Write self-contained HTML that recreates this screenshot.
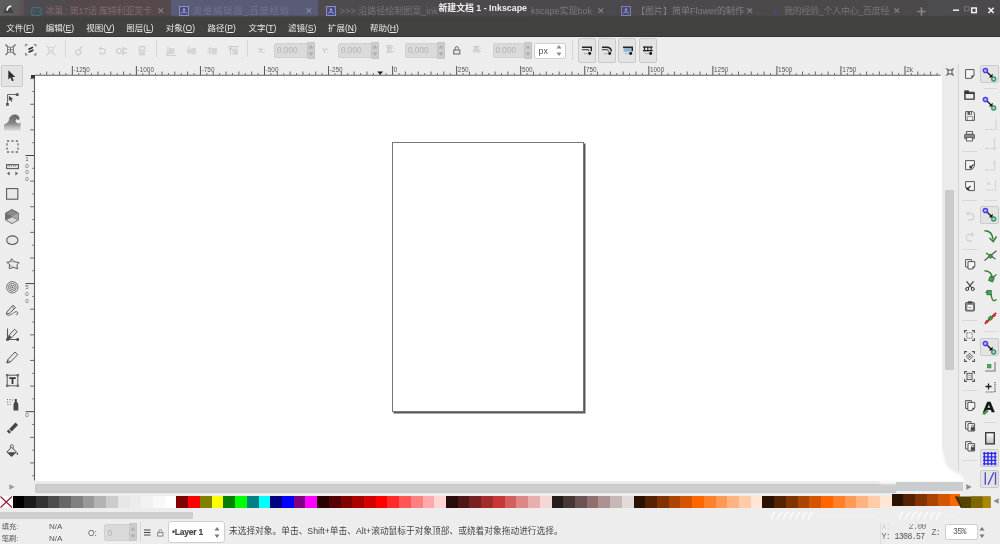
<!DOCTYPE html><html lang="zh"><head><meta charset="utf-8"><title>新建文档 1 - Inkscape</title><style>
*{box-sizing:border-box;margin:0;padding:0}
html,body{width:1000px;height:544px;overflow:hidden;background:#ededed}
body{position:relative;font-family:"Liberation Sans","Noto Sans CJK SC",sans-serif;font-size:8.5px;color:#3c3c3c}
.abs{position:absolute}
.t{position:absolute;white-space:nowrap;line-height:1}
#title{position:absolute;left:0;top:0;width:1000px;height:17.500px;background:#4b4849;overflow:hidden}
#title .tab{color:#8d8a8c;font-size:9px;top:7.300px}
#menu{position:absolute;left:0;top:16.500px;width:1000px;height:20px;background:#414140;border-bottom:1.500px solid #333}
#menu .t{color:#eceae6;font-size:8.500px;top:7.300px}
#menu u{text-decoration:underline;text-underline-offset:1px}
.sep{position:absolute;width:1px;background:#d6d6d6}
.hsep{position:absolute;height:1px;background:#d9d9d9}
.fld{position:absolute;background:#dadada;border:1px solid #d0d0d0;border-radius:2px}
.fld .t{color:#b4b4b4;font-size:8.5px}
.lbl{color:#b9b9b9;font-size:7.5px}
.wfld{position:absolute;background:#fff;border:1px solid #cfcfcf;border-radius:2px}
.tb{position:absolute;background:#e3e3e3;border:1px solid #cacaca;border-radius:2px}
svg{position:absolute;overflow:visible}
#hruler,#vruler,#menu,#title,#status,#toolbar,#snapbar{will-change:transform}
.sw{position:absolute;top:495.800px;height:12.300px}
</style></head><body>
<div id="title">
<div class="abs" style="left:0;top:0;width:1000px;height:19px;background:linear-gradient(90deg,#4e4c51 0,#4e4b50 40px,#54494c 90px,#56494c 165px,#4e4a4e 330px,#4b494c 600px,#4d494b 800px,#4b494b 1000px)"></div>
<div class="abs" style="left:0;top:0;width:23.500px;height:16px;background:linear-gradient(90deg,#5e5e5e,#5c5a5b 70%,#5a5053)"></div>
<div class="abs" style="left:171px;top:0;width:146.5px;height:17px;background:#5a5c77"></div>
<div class="abs" style="left:0;top:14.500px;width:1000px;height:2.500px;background:linear-gradient(180deg,rgba(65,65,64,0),#414140)"></div>
<svg style="left:2.500px;top:3px" width="12" height="11" viewBox="0 0 12 11"><path d="M.5 9.500L3 4L5.500 2.500L8.500 6L11 10H1Z" fill="#3b3b3b" opacity=".8"/><path d="M3.200 7.500C3.200 4.800 4.800 2.800 7.600 2.200L8.600 3.800C6.600 4.200 5.200 5.400 4.800 7.800Z" fill="#f2f2f2"/></svg>
<svg style="left:31px;top:6px" width="11" height="10" viewBox="0 0 11 10"><rect x=".7" y="1.7" width="9.6" height="7.6" rx="1.5" fill="none" stroke="#3c747d" stroke-width="1.2"/><path d="M3.4 4.6v1.6M7.6 4.6v1.6" stroke="#3c747d" stroke-width="1"/></svg>
<span class="t tab" style="left:45.5px;color:#82696c;letter-spacing:-.25px">冰菓 : 第17话 库特利亚芙卡</span>
<span class="t tab" style="left:157px;color:#8f8a8c;font-size:9px">✕</span>
<svg style="left:179px;top:6px" width="10" height="10" viewBox="0 0 10 10"><rect x=".5" y=".5" width="9" height="9" fill="#4b4f86" stroke="#8b8fbe" stroke-width="1"/><path d="M2.6 7.4 C2.6 5.4 7.4 5.4 7.4 7.4" fill="none" stroke="#b5b8dd" stroke-width="1"/><circle cx="5" cy="3.6" r="1.1" fill="#b5b8dd"/></svg>
<span class="t tab" style="left:193px;color:#70718a;letter-spacing:1.100px">奥维编辑器_百度经验</span>
<span class="t tab" style="left:305px;color:#8d8ea3">✕</span>
<svg style="left:326px;top:6px" width="10" height="10" viewBox="0 0 10 10"><rect x=".5" y=".5" width="9" height="9" fill="#474c8a" stroke="#8b8fbe" stroke-width="1"/><path d="M2.6 7.4 C2.6 5.4 7.4 5.4 7.4 7.4" fill="none" stroke="#b5b8dd" stroke-width="1"/><circle cx="5" cy="3.6" r="1.1" fill="#b5b8dd"/></svg>
<span class="t tab" style="left:340px;color:#767377">&gt;&gt;&gt; 沿路径绘制图案_ink</span>
<span class="t tab" style="left:531px;color:#7b787c">kscape实现bok</span>
<span class="t tab" style="left:597px;color:#8f8c90">✕</span>
<svg style="left:621px;top:6px" width="10" height="10" viewBox="0 0 10 10"><rect x=".5" y=".5" width="9" height="9" fill="#4a4a78" stroke="#7f7fa8" stroke-width="1"/><path d="M2.6 7.4 C2.6 5.4 7.4 5.4 7.4 7.4" fill="none" stroke="#a5a8cd" stroke-width="1"/><circle cx="5" cy="3.6" r="1.1" fill="#a5a8cd"/></svg>
<span class="t tab" style="left:636px;color:#807c80">【图片】简单Flower的制作</span>
<span class="t tab" style="left:746px;color:#8f8c90">✕</span>
<svg style="left:771px;top:6.500px" width="9" height="9" viewBox="0 0 9 9"><path d="M1 8 L4.5 .8 L8 8 Z" fill="#4c4670"/></svg>
<span class="t tab" style="left:784px;color:#767377;letter-spacing:-.3px">我的经验_个人中心_百度经</span>
<span class="t tab" style="left:893px;color:#8f8c90">✕</span>
<svg style="left:916.500px;top:7px" width="9" height="9" viewBox="0 0 9 9"><path d="M4.500 .3v8.400M.3 4.500h8.400" stroke="#858385" stroke-width="1.700"/></svg>
<span class="t" style="left:438.5px;top:4px;font-size:8.85px;font-weight:bold;color:#f2f1ef">新建文档 1 - Inkscape</span>
<div class="abs" style="left:928px;top:0;width:32px;height:16px;background:#4f4e55;opacity:.6"></div><svg style="left:951px;top:3.500px" width="48" height="12" viewBox="0 0 48 12"><path d="M2 6.200h6" stroke="#f0f0f0" stroke-width="1.500"/><rect x="13.500" y="2.800" width="4.500" height="4" fill="none" stroke="#77757a" stroke-width="1"/><rect x="20.700" y="4" width="4.600" height="4.600" fill="none" stroke="#f0f0f0" stroke-width="1.500"/><path d="M37.500 3.800l5.200 5.200M42.700 3.800l-5.200 5.200" stroke="#f0f0f0" stroke-width="1.600"/></svg>

</div>
<div id="menu">
<span class="t" style="left:6.2px">文件(<u>F</u>)</span>
<span class="t" style="left:45.7px">编辑(<u>E</u>)</span>
<span class="t" style="left:86.2px">视图(<u>V</u>)</span>
<span class="t" style="left:126.2px">图层(<u>L</u>)</span>
<span class="t" style="left:165.7px">对象(<u>O</u>)</span>
<span class="t" style="left:207.5px">路径(<u>P</u>)</span>
<span class="t" style="left:248.4px">文字(<u>T</u>)</span>
<span class="t" style="left:288px">滤镜(<u>S</u>)</span>
<span class="t" style="left:328px">扩展(<u>N</u>)</span>
<span class="t" style="left:370px">帮助(<u>H</u>)</span>
</div>
<div id="toolbar" class="abs" style="left:0;top:36px;width:1000px;height:28px">
<svg style="left:4.800px;top:8.400px" width="11" height="11.400" viewBox="0 0 11 11.400"><path d="M.5 .5l2.500 2.500M10.500 .5l-2.500 2.500M.5 10.900l2.500 -2.500M10.500 10.900l-2.500 -2.500" stroke="#6e6e6e" stroke-width="1.400"/><path d="M2.500 3.200h6v5h-6zM5.500 3.200v5M2.500 5.700h6" fill="none" stroke="#7a7a7a" stroke-width="1"/></svg>
<svg style="left:25px;top:8.400px" width="11.400" height="11.400" viewBox="0 0 11.400 11.400"><path d="M.6 2.600V.6H2.600M8.800 .6H10.800V2.600M.6 8.800V10.800H2.600M8.800 10.800H10.800V8.800" fill="none" stroke="#8a8a8a" stroke-width="1.300"/><path d="M3.400 5.400L8 3.200M3.600 8.200L8.400 6" fill="none" stroke="#333" stroke-width="1.700"/></svg>
<svg style="left:46.300px;top:9px" width="10" height="11" viewBox="0 0 10 11"><path d="M.5 .5l2 2M9.500 .5l-2 2M.5 10.500l2 -2M9.500 10.500l-2 -2" stroke="#d4d4d4" stroke-width="1.200"/><rect x="2.500" y="2.500" width="5" height="2.500" fill="none" stroke="#d6d6d6"/><rect x="2.500" y="6.500" width="5" height="2" fill="none" stroke="#d6d6d6"/></svg>
<div class="sep" style="left:65px;top:4px;height:17px"></div>
<svg style="left:75px;top:10px" width="8" height="10" viewBox="0 0 8 10"><circle cx="3.200" cy="6.300" r="2.500" fill="none" stroke="#cfcfcf" stroke-width="1.200"/><path d="M4.500 3.500l2.500 -3" stroke="#cfcfcf" stroke-width="1.200"/></svg>
<svg style="left:98px;top:10px" width="8" height="10" viewBox="0 0 8 10"><path d="M1 2.500h3.500a2.800 2.800 0 1 1 -2.800 3.500" fill="none" stroke="#cfcfcf" stroke-width="1.200"/><path d="M3 .3L.5 2.500L3 4.700Z" fill="#cfcfcf"/></svg>
<svg style="left:115.500px;top:10px" width="12" height="10" viewBox="0 0 12 10"><circle cx="3" cy="5" r="2.500" fill="none" stroke="#cdcdcd" stroke-width="1.200"/><path d="M7 1v8M7 3h4M7 7h4" stroke="#cdcdcd" stroke-width="1.400"/></svg>
<svg style="left:138px;top:10px" width="8" height="10" viewBox="0 0 8 10"><rect x="1.200" y=".6" width="5.600" height="3.400" rx="1" fill="none" stroke="#cdcdcd" stroke-width="1.200"/><path d="M.3 5.200h7.400" stroke="#cdcdcd" stroke-width="1"/><rect x="1" y="6.400" width="6" height="3" fill="#d2d2d2"/></svg>
<div class="sep" style="left:156px;top:4px;height:17px"></div>
<svg style="left:166px;top:10px" width="10" height="10" viewBox="0 0 10 10"><rect x="3" y="2" width="5.500" height="6" fill="#d6d6d6"/><path d="M2 0v8M0 6l2 2.300l2 -2.300M0 9.500h10" fill="none" stroke="#cfcfcf" stroke-width="1.100"/></svg>
<svg style="left:185.500px;top:10px" width="11" height="10" viewBox="0 0 11 10"><rect x="5" y="2" width="5" height="6.500" fill="#d6d6d6"/><path d="M3 0v7M1 5l2 2.300l2 -2.300M0 4h6" fill="none" stroke="#cfcfcf" stroke-width="1.100"/></svg>
<svg style="left:207px;top:10px" width="11" height="10" viewBox="0 0 11 10"><rect x="5" y="2" width="5" height="6.500" fill="#d6d6d6"/><path d="M3 9V2M1 4l2 -2.300l2 2.300M0 6h6" fill="none" stroke="#cfcfcf" stroke-width="1.100"/></svg>
<svg style="left:228px;top:10px" width="11" height="10" viewBox="0 0 11 10"><rect x="4.500" y="2.500" width="5.500" height="6.500" fill="#d6d6d6"/><path d="M2.500 9.500V2M.5 4l2 -2.300l2 2.300M0 .6h11" fill="none" stroke="#cfcfcf" stroke-width="1.100"/></svg>
<div class="sep" style="left:247px;top:4px;height:17px"></div>
<span class="t lbl" style="left:258px;top:10.5px">X:</span>
<div class="fld" style="left:274px;top:6.500px;width:40.500px;height:15.800px"><span class="t" style="left:2px;top:3.400px;font-size:8.200px">0.000</span></div>
<span class="t lbl" style="left:322px;top:10.5px">Y:</span>
<div class="fld" style="left:338px;top:6.500px;width:40.500px;height:15.800px"><span class="t" style="left:2px;top:3.400px;font-size:8.200px">0.000</span></div>
<span class="t lbl" style="left:385.500px;top:10.300px">宽:</span>
<div class="fld" style="left:405px;top:6.500px;width:40px;height:15.800px"><span class="t" style="left:2px;top:3.400px;font-size:8.200px">0.000</span></div>
<svg style="left:452.500px;top:10px" width="8" height="9" viewBox="0 0 8 9"><rect x=".8" y="4" width="6" height="4" fill="none" stroke="#6a6a6a" stroke-width="1.100"/><path d="M2.200 4V2.200a1.600 1.600 0 0 1 3.200 0V3" fill="none" stroke="#6a6a6a" stroke-width="1"/></svg>
<span class="t lbl" style="left:472.500px;top:10.300px">高:</span>
<div class="fld" style="left:492.500px;top:6.500px;width:39px;height:15.800px"><span class="t" style="left:2px;top:3.400px;font-size:8.200px">0.000</span></div>
<div class="wfld" style="left:534px;top:6.500px;width:32px;height:16.500px"><span class="t" style="left:3.500px;top:3px;color:#555;font-size:8.800px">px</span></div>
<div class="sep" style="left:572px;top:4px;height:20px"></div>
<div class="tb" style="left:577.500px;top:2px;width:18.300px;height:25px"></div>
<div class="tb" style="left:597.500px;top:2px;width:18.300px;height:25px"></div>
<div class="tb" style="left:618px;top:2px;width:18.300px;height:25px"></div>
<div class="tb" style="left:638.500px;top:2px;width:18.300px;height:25px"></div>
<div class="abs" style="left:306.5px;top:6px;width:8px;height:17px;background:#cdcdcd;border:1px solid #c4c4c4;border-radius:1px"></div>
<svg style="left:307.5px;top:8.2px" width="6" height="13" viewBox="0 0 6 13"><path d="M.5 4.500L3 1L5.500 4.500Z M.5 8.500L3 12L5.500 8.500Z" fill="#aeaeae"/></svg>
<div class="abs" style="left:370.5px;top:6px;width:8px;height:17px;background:#cdcdcd;border:1px solid #c4c4c4;border-radius:1px"></div>
<svg style="left:371.5px;top:8.2px" width="6" height="13" viewBox="0 0 6 13"><path d="M.5 4.500L3 1L5.500 4.500Z M.5 8.500L3 12L5.500 8.500Z" fill="#aeaeae"/></svg>
<div class="abs" style="left:437px;top:6px;width:8px;height:17px;background:#cdcdcd;border:1px solid #c4c4c4;border-radius:1px"></div>
<svg style="left:438px;top:8.2px" width="6" height="13" viewBox="0 0 6 13"><path d="M.5 4.500L3 1L5.500 4.500Z M.5 8.500L3 12L5.500 8.500Z" fill="#aeaeae"/></svg>
<div class="abs" style="left:523.5px;top:6px;width:8px;height:17px;background:#cdcdcd;border:1px solid #c4c4c4;border-radius:1px"></div>
<svg style="left:524.5px;top:8.2px" width="6" height="13" viewBox="0 0 6 13"><path d="M.5 4.500L3 1L5.500 4.500Z M.5 8.500L3 12L5.500 8.500Z" fill="#aeaeae"/></svg>
<svg style="left:556px;top:8.2px" width="6" height="13" viewBox="0 0 6 13"><path d="M.5 4.500L3 1L5.500 4.500Z M.5 8.500L3 12L5.500 8.500Z" fill="#8a8a8a"/></svg>
<svg style="left:581.7px;top:9.600px" width="10" height="9" viewBox="0 0 10 9"><path d="M0 1.200H9.300V5.200" stroke="#222" stroke-width="1.400" fill="none"/><path d="M0 3.700H6.600V5.200" stroke="#333" stroke-width="1" fill="none"/><circle cx="7.700" cy="7.500" r="1.450" fill="#111"/><path d="M2.200 7.600h3.600" stroke="#777" stroke-width=".8" stroke-dasharray=".9 .6"/></svg>
<svg style="left:602.2px;top:9.600px" width="10" height="9" viewBox="0 0 10 9"><path d="M0 1.200H4.500C7.500 1.200 9.300 3 9.300 5.600" stroke="#222" stroke-width="1.400" fill="none"/><path d="M0 3.700H4C6 3.700 6.800 4.500 6.800 5.600" stroke="#333" stroke-width="1" fill="none"/><circle cx="7.700" cy="7.500" r="1.450" fill="#111"/><path d="M2.200 7.600h3.600" stroke="#777" stroke-width=".8" stroke-dasharray=".9 .6"/></svg>
<svg style="left:622.6px;top:9.600px" width="10" height="9" viewBox="0 0 10 9"><rect x=".5" y="1.800" width="8.300" height="4" fill="#8fb4dc"/><path d="M0 1.200H9.300V5.200" stroke="#222" stroke-width="1.400" fill="none"/><circle cx="7.700" cy="7.500" r="1.450" fill="#111"/><path d="M2.200 7.600h3.600" stroke="#777" stroke-width=".8" stroke-dasharray=".9 .6"/></svg>
<svg style="left:643px;top:9.600px" width="10" height="9" viewBox="0 0 10 9"><path d="M0 1.200H9.600M0 4.600H9.600" stroke="#222" stroke-width="1.300" fill="none"/><path d="M1.500 .6V5.200M4.800 .6V5.200M8.100 .6V5.200" stroke="#222" stroke-width="1.100"/><circle cx="7.700" cy="7.500" r="1.450" fill="#111"/><path d="M2.200 7.600h3.600" stroke="#777" stroke-width=".8" stroke-dasharray=".9 .6"/></svg>

</div>
<div class="abs" id="canvas" style="left:35px;top:76px;width:907px;height:405px;background:#fff"></div>
<div class="abs" id="page" style="left:392px;top:142px;width:191.700px;height:270px;border:1px solid #777;background:#fff;box-shadow:1.500px 1.500px 0 0 #585858"></div>
<svg style="left:0px;top:0px" width="1000" height="80" viewBox="0 0 1000 80" id="hruler" font-family="Liberation Sans, sans-serif"><line x1="35" y1="75.200" x2="940.500" y2="75.200" stroke="#626262" stroke-width="1.100"/><line x1="40.33" y1="73" x2="40.33" y2="75" stroke="#777" stroke-width="1"/><line x1="46.73" y1="71.5" x2="46.73" y2="75" stroke="#6a6a6a" stroke-width="1"/><line x1="53.14" y1="73" x2="53.14" y2="75" stroke="#777" stroke-width="1"/><line x1="59.54" y1="71.5" x2="59.54" y2="75" stroke="#6a6a6a" stroke-width="1"/><line x1="65.95" y1="73" x2="65.95" y2="75" stroke="#777" stroke-width="1"/><line x1="72.35" y1="66" x2="72.35" y2="75" stroke="#555" stroke-width="1"/><text x="73.55" y="71.500" font-size="6.400" fill="#555">-1250</text><line x1="78.76" y1="73" x2="78.76" y2="75" stroke="#777" stroke-width="1"/><line x1="85.16" y1="71.5" x2="85.16" y2="75" stroke="#6a6a6a" stroke-width="1"/><line x1="91.57" y1="73" x2="91.57" y2="75" stroke="#777" stroke-width="1"/><line x1="97.97" y1="71.5" x2="97.97" y2="75" stroke="#6a6a6a" stroke-width="1"/><line x1="104.38" y1="73" x2="104.38" y2="75" stroke="#777" stroke-width="1"/><line x1="110.78" y1="71.5" x2="110.78" y2="75" stroke="#6a6a6a" stroke-width="1"/><line x1="117.19" y1="73" x2="117.19" y2="75" stroke="#777" stroke-width="1"/><line x1="123.59" y1="71.5" x2="123.59" y2="75" stroke="#6a6a6a" stroke-width="1"/><line x1="130.00" y1="73" x2="130.00" y2="75" stroke="#777" stroke-width="1"/><line x1="136.40" y1="66" x2="136.40" y2="75" stroke="#555" stroke-width="1"/><text x="137.60" y="71.500" font-size="6.400" fill="#555">-1000</text><line x1="142.81" y1="73" x2="142.81" y2="75" stroke="#777" stroke-width="1"/><line x1="149.21" y1="71.5" x2="149.21" y2="75" stroke="#6a6a6a" stroke-width="1"/><line x1="155.62" y1="73" x2="155.62" y2="75" stroke="#777" stroke-width="1"/><line x1="162.02" y1="71.5" x2="162.02" y2="75" stroke="#6a6a6a" stroke-width="1"/><line x1="168.43" y1="73" x2="168.43" y2="75" stroke="#777" stroke-width="1"/><line x1="174.83" y1="71.5" x2="174.83" y2="75" stroke="#6a6a6a" stroke-width="1"/><line x1="181.24" y1="73" x2="181.24" y2="75" stroke="#777" stroke-width="1"/><line x1="187.64" y1="71.5" x2="187.64" y2="75" stroke="#6a6a6a" stroke-width="1"/><line x1="194.05" y1="73" x2="194.05" y2="75" stroke="#777" stroke-width="1"/><line x1="200.45" y1="66" x2="200.45" y2="75" stroke="#555" stroke-width="1"/><text x="201.65" y="71.500" font-size="6.400" fill="#555">-750</text><line x1="206.86" y1="73" x2="206.86" y2="75" stroke="#777" stroke-width="1"/><line x1="213.26" y1="71.5" x2="213.26" y2="75" stroke="#6a6a6a" stroke-width="1"/><line x1="219.67" y1="73" x2="219.67" y2="75" stroke="#777" stroke-width="1"/><line x1="226.07" y1="71.5" x2="226.07" y2="75" stroke="#6a6a6a" stroke-width="1"/><line x1="232.48" y1="73" x2="232.48" y2="75" stroke="#777" stroke-width="1"/><line x1="238.88" y1="71.5" x2="238.88" y2="75" stroke="#6a6a6a" stroke-width="1"/><line x1="245.29" y1="73" x2="245.29" y2="75" stroke="#777" stroke-width="1"/><line x1="251.69" y1="71.5" x2="251.69" y2="75" stroke="#6a6a6a" stroke-width="1"/><line x1="258.10" y1="73" x2="258.10" y2="75" stroke="#777" stroke-width="1"/><line x1="264.50" y1="66" x2="264.50" y2="75" stroke="#555" stroke-width="1"/><text x="265.70" y="71.500" font-size="6.400" fill="#555">-500</text><line x1="270.91" y1="73" x2="270.91" y2="75" stroke="#777" stroke-width="1"/><line x1="277.31" y1="71.5" x2="277.31" y2="75" stroke="#6a6a6a" stroke-width="1"/><line x1="283.72" y1="73" x2="283.72" y2="75" stroke="#777" stroke-width="1"/><line x1="290.12" y1="71.5" x2="290.12" y2="75" stroke="#6a6a6a" stroke-width="1"/><line x1="296.53" y1="73" x2="296.53" y2="75" stroke="#777" stroke-width="1"/><line x1="302.93" y1="71.5" x2="302.93" y2="75" stroke="#6a6a6a" stroke-width="1"/><line x1="309.34" y1="73" x2="309.34" y2="75" stroke="#777" stroke-width="1"/><line x1="315.74" y1="71.5" x2="315.74" y2="75" stroke="#6a6a6a" stroke-width="1"/><line x1="322.15" y1="73" x2="322.15" y2="75" stroke="#777" stroke-width="1"/><line x1="328.55" y1="66" x2="328.55" y2="75" stroke="#555" stroke-width="1"/><text x="329.75" y="71.500" font-size="6.400" fill="#555">-250</text><line x1="334.96" y1="73" x2="334.96" y2="75" stroke="#777" stroke-width="1"/><line x1="341.36" y1="71.5" x2="341.36" y2="75" stroke="#6a6a6a" stroke-width="1"/><line x1="347.77" y1="73" x2="347.77" y2="75" stroke="#777" stroke-width="1"/><line x1="354.17" y1="71.5" x2="354.17" y2="75" stroke="#6a6a6a" stroke-width="1"/><line x1="360.58" y1="73" x2="360.58" y2="75" stroke="#777" stroke-width="1"/><line x1="366.98" y1="71.5" x2="366.98" y2="75" stroke="#6a6a6a" stroke-width="1"/><line x1="373.39" y1="73" x2="373.39" y2="75" stroke="#777" stroke-width="1"/><line x1="379.79" y1="71.5" x2="379.79" y2="75" stroke="#6a6a6a" stroke-width="1"/><line x1="386.20" y1="73" x2="386.20" y2="75" stroke="#777" stroke-width="1"/><line x1="392.60" y1="66" x2="392.60" y2="75" stroke="#555" stroke-width="1"/><text x="393.80" y="71.500" font-size="6.400" fill="#555">0</text><line x1="399.00" y1="73" x2="399.00" y2="75" stroke="#777" stroke-width="1"/><line x1="405.41" y1="71.5" x2="405.41" y2="75" stroke="#6a6a6a" stroke-width="1"/><line x1="411.81" y1="73" x2="411.81" y2="75" stroke="#777" stroke-width="1"/><line x1="418.22" y1="71.5" x2="418.22" y2="75" stroke="#6a6a6a" stroke-width="1"/><line x1="424.62" y1="73" x2="424.62" y2="75" stroke="#777" stroke-width="1"/><line x1="431.03" y1="71.5" x2="431.03" y2="75" stroke="#6a6a6a" stroke-width="1"/><line x1="437.44" y1="73" x2="437.44" y2="75" stroke="#777" stroke-width="1"/><line x1="443.84" y1="71.5" x2="443.84" y2="75" stroke="#6a6a6a" stroke-width="1"/><line x1="450.25" y1="73" x2="450.25" y2="75" stroke="#777" stroke-width="1"/><line x1="456.65" y1="66" x2="456.65" y2="75" stroke="#555" stroke-width="1"/><text x="457.85" y="71.500" font-size="6.400" fill="#555">250</text><line x1="463.06" y1="73" x2="463.06" y2="75" stroke="#777" stroke-width="1"/><line x1="469.46" y1="71.5" x2="469.46" y2="75" stroke="#6a6a6a" stroke-width="1"/><line x1="475.87" y1="73" x2="475.87" y2="75" stroke="#777" stroke-width="1"/><line x1="482.27" y1="71.5" x2="482.27" y2="75" stroke="#6a6a6a" stroke-width="1"/><line x1="488.68" y1="73" x2="488.68" y2="75" stroke="#777" stroke-width="1"/><line x1="495.08" y1="71.5" x2="495.08" y2="75" stroke="#6a6a6a" stroke-width="1"/><line x1="501.49" y1="73" x2="501.49" y2="75" stroke="#777" stroke-width="1"/><line x1="507.89" y1="71.5" x2="507.89" y2="75" stroke="#6a6a6a" stroke-width="1"/><line x1="514.30" y1="73" x2="514.30" y2="75" stroke="#777" stroke-width="1"/><line x1="520.70" y1="66" x2="520.70" y2="75" stroke="#555" stroke-width="1"/><text x="521.90" y="71.500" font-size="6.400" fill="#555">500</text><line x1="527.11" y1="73" x2="527.11" y2="75" stroke="#777" stroke-width="1"/><line x1="533.51" y1="71.5" x2="533.51" y2="75" stroke="#6a6a6a" stroke-width="1"/><line x1="539.91" y1="73" x2="539.91" y2="75" stroke="#777" stroke-width="1"/><line x1="546.32" y1="71.5" x2="546.32" y2="75" stroke="#6a6a6a" stroke-width="1"/><line x1="552.73" y1="73" x2="552.73" y2="75" stroke="#777" stroke-width="1"/><line x1="559.13" y1="71.5" x2="559.13" y2="75" stroke="#6a6a6a" stroke-width="1"/><line x1="565.53" y1="73" x2="565.53" y2="75" stroke="#777" stroke-width="1"/><line x1="571.94" y1="71.5" x2="571.94" y2="75" stroke="#6a6a6a" stroke-width="1"/><line x1="578.35" y1="73" x2="578.35" y2="75" stroke="#777" stroke-width="1"/><line x1="584.75" y1="66" x2="584.75" y2="75" stroke="#555" stroke-width="1"/><text x="585.95" y="71.500" font-size="6.400" fill="#555">750</text><line x1="591.15" y1="73" x2="591.15" y2="75" stroke="#777" stroke-width="1"/><line x1="597.56" y1="71.5" x2="597.56" y2="75" stroke="#6a6a6a" stroke-width="1"/><line x1="603.97" y1="73" x2="603.97" y2="75" stroke="#777" stroke-width="1"/><line x1="610.37" y1="71.5" x2="610.37" y2="75" stroke="#6a6a6a" stroke-width="1"/><line x1="616.77" y1="73" x2="616.77" y2="75" stroke="#777" stroke-width="1"/><line x1="623.18" y1="71.5" x2="623.18" y2="75" stroke="#6a6a6a" stroke-width="1"/><line x1="629.59" y1="73" x2="629.59" y2="75" stroke="#777" stroke-width="1"/><line x1="635.99" y1="71.5" x2="635.99" y2="75" stroke="#6a6a6a" stroke-width="1"/><line x1="642.39" y1="73" x2="642.39" y2="75" stroke="#777" stroke-width="1"/><line x1="648.80" y1="66" x2="648.80" y2="75" stroke="#555" stroke-width="1"/><text x="650.00" y="71.500" font-size="6.400" fill="#555">1000</text><line x1="655.20" y1="73" x2="655.20" y2="75" stroke="#777" stroke-width="1"/><line x1="661.61" y1="71.5" x2="661.61" y2="75" stroke="#6a6a6a" stroke-width="1"/><line x1="668.01" y1="73" x2="668.01" y2="75" stroke="#777" stroke-width="1"/><line x1="674.42" y1="71.5" x2="674.42" y2="75" stroke="#6a6a6a" stroke-width="1"/><line x1="680.83" y1="73" x2="680.83" y2="75" stroke="#777" stroke-width="1"/><line x1="687.23" y1="71.5" x2="687.23" y2="75" stroke="#6a6a6a" stroke-width="1"/><line x1="693.63" y1="73" x2="693.63" y2="75" stroke="#777" stroke-width="1"/><line x1="700.04" y1="71.5" x2="700.04" y2="75" stroke="#6a6a6a" stroke-width="1"/><line x1="706.44" y1="73" x2="706.44" y2="75" stroke="#777" stroke-width="1"/><line x1="712.85" y1="66" x2="712.85" y2="75" stroke="#555" stroke-width="1"/><text x="714.05" y="71.500" font-size="6.400" fill="#555">1250</text><line x1="719.25" y1="73" x2="719.25" y2="75" stroke="#777" stroke-width="1"/><line x1="725.66" y1="71.5" x2="725.66" y2="75" stroke="#6a6a6a" stroke-width="1"/><line x1="732.07" y1="73" x2="732.07" y2="75" stroke="#777" stroke-width="1"/><line x1="738.47" y1="71.5" x2="738.47" y2="75" stroke="#6a6a6a" stroke-width="1"/><line x1="744.88" y1="73" x2="744.88" y2="75" stroke="#777" stroke-width="1"/><line x1="751.28" y1="71.5" x2="751.28" y2="75" stroke="#6a6a6a" stroke-width="1"/><line x1="757.68" y1="73" x2="757.68" y2="75" stroke="#777" stroke-width="1"/><line x1="764.09" y1="71.5" x2="764.09" y2="75" stroke="#6a6a6a" stroke-width="1"/><line x1="770.50" y1="73" x2="770.50" y2="75" stroke="#777" stroke-width="1"/><line x1="776.90" y1="66" x2="776.90" y2="75" stroke="#555" stroke-width="1"/><text x="778.10" y="71.500" font-size="6.400" fill="#555">1500</text><line x1="783.31" y1="73" x2="783.31" y2="75" stroke="#777" stroke-width="1"/><line x1="789.71" y1="71.5" x2="789.71" y2="75" stroke="#6a6a6a" stroke-width="1"/><line x1="796.12" y1="73" x2="796.12" y2="75" stroke="#777" stroke-width="1"/><line x1="802.52" y1="71.5" x2="802.52" y2="75" stroke="#6a6a6a" stroke-width="1"/><line x1="808.92" y1="73" x2="808.92" y2="75" stroke="#777" stroke-width="1"/><line x1="815.33" y1="71.5" x2="815.33" y2="75" stroke="#6a6a6a" stroke-width="1"/><line x1="821.73" y1="73" x2="821.73" y2="75" stroke="#777" stroke-width="1"/><line x1="828.14" y1="71.5" x2="828.14" y2="75" stroke="#6a6a6a" stroke-width="1"/><line x1="834.54" y1="73" x2="834.54" y2="75" stroke="#777" stroke-width="1"/><line x1="840.95" y1="66" x2="840.95" y2="75" stroke="#555" stroke-width="1"/><text x="842.15" y="71.500" font-size="6.400" fill="#555">1750</text><line x1="847.36" y1="73" x2="847.36" y2="75" stroke="#777" stroke-width="1"/><line x1="853.76" y1="71.5" x2="853.76" y2="75" stroke="#6a6a6a" stroke-width="1"/><line x1="860.16" y1="73" x2="860.16" y2="75" stroke="#777" stroke-width="1"/><line x1="866.57" y1="71.5" x2="866.57" y2="75" stroke="#6a6a6a" stroke-width="1"/><line x1="872.97" y1="73" x2="872.97" y2="75" stroke="#777" stroke-width="1"/><line x1="879.38" y1="71.5" x2="879.38" y2="75" stroke="#6a6a6a" stroke-width="1"/><line x1="885.78" y1="73" x2="885.78" y2="75" stroke="#777" stroke-width="1"/><line x1="892.19" y1="71.5" x2="892.19" y2="75" stroke="#6a6a6a" stroke-width="1"/><line x1="898.60" y1="73" x2="898.60" y2="75" stroke="#777" stroke-width="1"/><line x1="905.00" y1="66" x2="905.00" y2="75" stroke="#555" stroke-width="1"/><text x="906.20" y="71.500" font-size="6.400" fill="#555">2k</text><line x1="911.40" y1="73" x2="911.40" y2="75" stroke="#777" stroke-width="1"/><line x1="917.81" y1="71.5" x2="917.81" y2="75" stroke="#6a6a6a" stroke-width="1"/><line x1="924.21" y1="73" x2="924.21" y2="75" stroke="#777" stroke-width="1"/><line x1="930.62" y1="71.5" x2="930.62" y2="75" stroke="#6a6a6a" stroke-width="1"/><line x1="937.02" y1="73" x2="937.02" y2="75" stroke="#777" stroke-width="1"/><path d="M377.200 71.600 L383.200 71.600 L380.200 74.800 Z" fill="#222"/></svg>
<svg style="left:0px;top:0px" width="40" height="544" viewBox="0 0 40 544" id="vruler" font-family="Liberation Sans, sans-serif"><line x1="34.5" y1="76" x2="34.5" y2="480.500" stroke="#606060" stroke-width="1.100"/><line x1="32.200" y1="475.75" x2="34" y2="475.75" stroke="#777" stroke-width="1"/><line x1="30.200" y1="462.94" x2="34" y2="462.94" stroke="#6a6a6a" stroke-width="1"/><line x1="32.200" y1="450.13" x2="34" y2="450.13" stroke="#777" stroke-width="1"/><line x1="30.200" y1="437.32" x2="34" y2="437.32" stroke="#6a6a6a" stroke-width="1"/><line x1="32.200" y1="424.51" x2="34" y2="424.51" stroke="#777" stroke-width="1"/><line x1="25.5" y1="411.70" x2="34" y2="411.70" stroke="#444" stroke-width="1"/><text x="25.300" y="417.40" font-size="6.200" fill="#6a6a6a">0</text><line x1="32.200" y1="398.89" x2="34" y2="398.89" stroke="#777" stroke-width="1"/><line x1="30.200" y1="386.08" x2="34" y2="386.08" stroke="#6a6a6a" stroke-width="1"/><line x1="32.200" y1="373.27" x2="34" y2="373.27" stroke="#777" stroke-width="1"/><line x1="30.200" y1="360.46" x2="34" y2="360.46" stroke="#6a6a6a" stroke-width="1"/><line x1="32.200" y1="347.65" x2="34" y2="347.65" stroke="#777" stroke-width="1"/><line x1="30.200" y1="334.84" x2="34" y2="334.84" stroke="#6a6a6a" stroke-width="1"/><line x1="32.200" y1="322.03" x2="34" y2="322.03" stroke="#777" stroke-width="1"/><line x1="30.200" y1="309.22" x2="34" y2="309.22" stroke="#6a6a6a" stroke-width="1"/><line x1="32.200" y1="296.41" x2="34" y2="296.41" stroke="#777" stroke-width="1"/><line x1="25.5" y1="283.60" x2="34" y2="283.60" stroke="#444" stroke-width="1"/><text x="25.300" y="289.30" font-size="6.200" fill="#6a6a6a">5</text><text x="25.300" y="295.90" font-size="6.200" fill="#6a6a6a">0</text><text x="25.300" y="302.50" font-size="6.200" fill="#6a6a6a">0</text><line x1="32.200" y1="270.79" x2="34" y2="270.79" stroke="#777" stroke-width="1"/><line x1="30.200" y1="257.98" x2="34" y2="257.98" stroke="#6a6a6a" stroke-width="1"/><line x1="32.200" y1="245.17" x2="34" y2="245.17" stroke="#777" stroke-width="1"/><line x1="30.200" y1="232.36" x2="34" y2="232.36" stroke="#6a6a6a" stroke-width="1"/><line x1="32.200" y1="219.55" x2="34" y2="219.55" stroke="#777" stroke-width="1"/><line x1="30.200" y1="206.74" x2="34" y2="206.74" stroke="#6a6a6a" stroke-width="1"/><line x1="32.200" y1="193.93" x2="34" y2="193.93" stroke="#777" stroke-width="1"/><line x1="30.200" y1="181.12" x2="34" y2="181.12" stroke="#6a6a6a" stroke-width="1"/><line x1="32.200" y1="168.31" x2="34" y2="168.31" stroke="#777" stroke-width="1"/><line x1="25.5" y1="155.50" x2="34" y2="155.50" stroke="#444" stroke-width="1"/><text x="25.300" y="161.20" font-size="6.200" fill="#6a6a6a">1</text><text x="25.300" y="167.80" font-size="6.200" fill="#6a6a6a">0</text><text x="25.300" y="174.40" font-size="6.200" fill="#6a6a6a">0</text><text x="25.300" y="181.00" font-size="6.200" fill="#6a6a6a">0</text><line x1="32.200" y1="142.69" x2="34" y2="142.69" stroke="#777" stroke-width="1"/><line x1="30.200" y1="129.88" x2="34" y2="129.88" stroke="#6a6a6a" stroke-width="1"/><line x1="32.200" y1="117.07" x2="34" y2="117.07" stroke="#777" stroke-width="1"/><line x1="30.200" y1="104.26" x2="34" y2="104.26" stroke="#6a6a6a" stroke-width="1"/><line x1="32.200" y1="91.45" x2="34" y2="91.45" stroke="#777" stroke-width="1"/><line x1="30.200" y1="78.64" x2="34" y2="78.64" stroke="#6a6a6a" stroke-width="1"/><rect x="31" y="75" width="4" height="3" fill="#333"/></svg>
<div id="toolbox">
<div class="tb" style="left:1px;top:65px;width:22px;height:22px"></div>
<svg style="left:8px;top:70px" width="8" height="12" viewBox="0 0 8 12"><path d="M.3 .3V9.600L2.400 7.600L4 11.300L5.700 10.500L4.100 7L7.300 6.900Z" fill="#2e2e2e"/></svg>
<svg style="left:5.500px;top:93px" width="13" height="13" viewBox="0 0 13 13"><path d="M1.500 11V1.500H11" fill="none" stroke="#6b6b6b" stroke-width="1"/><rect x="0" y="10" width="2.800" height="2.800" fill="#5a5a5a"/><rect x="9.800" y=".2" width="2.800" height="2.800" fill="#5a5a5a"/><path d="M2.800 2.800V8L4.200 6.700L5.300 8.800L6.400 8.200L5.400 6.200L7.300 6.100Z" fill="#474747"/></svg>
<svg style="left:3.500px;top:114px" width="17" height="17" viewBox="0 0 17 17"><defs><linearGradient id="tw" x1="0" y1="0" x2="0" y2="1"><stop offset="0" stop-color="#6b6b6b"/><stop offset=".55" stop-color="#888"/><stop offset="1" stop-color="#c8c8c8" stop-opacity=".6"/></linearGradient></defs><path d="M0 16.500V10.500C2.500 10 4.500 8 5.500 5C6.500 1.800 9.500 .2 12.500 1.200C14.800 2 15.500 4.300 14.500 5.800C13.800 4.600 12.300 4.300 11.400 5.200C10.400 6.300 11 8 12.500 9C14 9.800 15.500 9.300 16.500 8.500V16.500Z" fill="url(#tw)"/><path d="M5.500 5C6.500 1.800 9.500 .2 12.500 1.200C14.800 2 15.500 4.300 14.500 5.800C13.800 4.600 12.300 4.300 11.400 5.200C10.400 6.300 11 8 12.500 9" fill="none" stroke="#5a5a5a" stroke-width=".9"/></svg>
<svg style="left:5.500px;top:140px" width="13" height="13" viewBox="0 0 13 13"><rect x="1" y="1" width="11" height="11" fill="none" stroke="#6b6b6b" stroke-width="1.300" stroke-dasharray="2.200 2.200"/></svg>
<svg style="left:5.500px;top:163.500px" width="13" height="12" viewBox="0 0 13 12"><rect x=".6" y=".6" width="11.800" height="4" fill="#e6e6e6" stroke="#5a5a5a" stroke-width="1.100"/><path d="M3 .6v2M5.200 .6v2M7.400 .6v2M9.600 .6v2" stroke="#6b6b6b" stroke-width=".8"/><path d="M3.600 7.500v4L1 9.500ZM9.400 7.500v4L12 9.500Z" fill="#5a5a5a"/></svg>
<svg style="left:5.500px;top:187.500px" width="13" height="12" viewBox="0 0 13 12"><rect x=".6" y=".6" width="11.200" height="10.600" fill="#e9e9e9" stroke="#5a5a5a" stroke-width="1.100"/></svg>
<svg style="left:5px;top:209px" width="14" height="15" viewBox="0 0 14 15"><path d="M7 .5L13.300 4V11L7 14.500L.7 11V4Z" fill="#8a8a8a" stroke="#5a5a5a" stroke-width=".9"/><path d="M.7 4L7 7.500V14.500L.7 11Z" fill="#6e6e6e"/><path d="M7 7.500L13.300 4V11L7 14.500Z" fill="#a5a5a5"/><path d="M.7 11L7 8L13.300 11L7 14.500Z" fill="#d9d9d9" stroke="#6b6b6b" stroke-width=".6"/></svg>
<svg style="left:5.500px;top:235px" width="13" height="11" viewBox="0 0 13 11"><ellipse cx="6.300" cy="5.200" rx="5.600" ry="4.300" fill="#e9e9e9" stroke="#5a5a5a" stroke-width="1.100"/></svg>
<svg style="left:5.500px;top:258px" width="14" height="12" viewBox="0 0 14 12"><path d="M5.500 .7L8.300 3.700L13 4.600L10.800 7.200L11.800 10.800L7.500 9.400L3.200 10.600L3.600 6.600L.8 4.300L4.400 3.700Z" fill="#eaeaea" stroke="#5a5a5a" stroke-width="1"/><path d="M4.400 3.700L8.300 3.700M3.600 6.600L7.500 9.400" stroke="#777" stroke-width=".6"/></svg>
<svg style="left:5.500px;top:280.500px" width="13" height="13" viewBox="0 0 13 13"><circle cx="6.300" cy="6.300" r="5.700" fill="none" stroke="#6b6b6b" stroke-width="1"/><circle cx="6.300" cy="6.300" r="3.900" fill="none" stroke="#6b6b6b" stroke-width=".9"/><circle cx="6.300" cy="6.300" r="2.200" fill="none" stroke="#6b6b6b" stroke-width=".9"/><circle cx="6.300" cy="6.300" r=".9" fill="#5a5a5a"/></svg>
<svg style="left:5.500px;top:304px" width="13" height="13" viewBox="0 0 13 13"><path d="M.8 8L7 1.200L9.600 3.600L3.400 9.400L.5 10Z" fill="#e5e5e5" stroke="#5a5a5a" stroke-width="1"/><path d="M5.800 2.500L8.400 4.900" stroke="#5a5a5a" stroke-width=".8"/><path d="M.5 10.500C3 12.500 6 10 8.500 8.300C10.500 7 12 8 11.800 9.500C11.600 10.800 10 11 9.800 10" fill="none" stroke="#5a5a5a" stroke-width="1"/></svg>
<svg style="left:5.500px;top:327.500px" width="13" height="13" viewBox="0 0 13 13"><path d="M1.500 .5V11.500H12" fill="none" stroke="#5a5a5a" stroke-width="1.100"/><rect x=".2" y="10.200" width="2.600" height="2.600" fill="#474747"/><rect x="10.400" y="10.200" width="2.600" height="2.600" fill="#474747"/><path d="M1.800 11.200L3.200 7L8.500 1.200L11.200 3.700L5.800 9.500Z" fill="#e5e5e5" stroke="#5a5a5a" stroke-width="1"/><path d="M1.800 11.200L3.200 7L5.800 9.500Z" fill="#474747"/></svg>
<svg style="left:5.500px;top:351px" width="13" height="13" viewBox="0 0 13 13"><path d="M.8 12L1.800 8.600L9 1L11.800 3.600L4.400 11Z" fill="#e8e8e8" stroke="#5a5a5a" stroke-width="1"/><path d="M1.800 8.600L4.400 11" stroke="#5a5a5a" stroke-width=".8"/><path d="M.8 12L1.500 9.800L3 11.300Z" fill="#474747"/></svg>
<svg style="left:5.500px;top:374px" width="13" height="13" viewBox="0 0 13 13"><rect x="1.200" y="1.200" width="10.600" height="10.600" fill="#ececec" stroke="#5a5a5a" stroke-width="1"/><rect x="0" y="0" width="2.400" height="2.400" fill="#6b6b6b"/><rect x="10.600" y="0" width="2.400" height="2.400" fill="#6b6b6b"/><rect x="0" y="10.600" width="2.400" height="2.400" fill="#6b6b6b"/><rect x="10.600" y="10.600" width="2.400" height="2.400" fill="#6b6b6b"/><path d="M3.300 3.300H9.700V5H7.400V10H5.600V5H3.300Z" fill="#333"/></svg>
<svg style="left:5.500px;top:397.500px" width="13" height="13" viewBox="0 0 13 13"><path d="M7.500 12.500V6L8.800 3.500V1H10.800V3.500L12.300 6V12.500Z" fill="#474747"/><path d="M1 1.500h1M3.500 1.500h1M6 2h1M1 4h1M3.500 4h1M1.500 6.500h1M4 6.500h.8" stroke="#6b6b6b" stroke-width="1"/></svg>
<svg style="left:5.500px;top:421px" width="13" height="13" viewBox="0 0 13 13"><path d="M3.200 8L9.500 1.500L12 4L5.700 10.500Z" fill="#474747"/><path d="M.8 10.300L2.500 8.600L5 11.100L3.300 12.800Z" fill="#474747"/></svg>
<svg style="left:5.500px;top:444px" width="13" height="13" viewBox="0 0 13 13"><path d="M4.300 4.500V2.200A1.500 1.500 0 0 1 7.300 2.200V4.500" fill="none" stroke="#6b6b6b" stroke-width="1"/><path d="M5.500 3.200L10.500 8L5.500 12.500L.8 8Z" fill="#e4e4e4" stroke="#474747" stroke-width="1"/><path d="M1.500 8.300H10L5.500 12.300Z" fill="#474747"/><path d="M11.300 8.200C12.300 9.600 12.300 10.800 11.300 11C10.500 10.800 10.500 9.600 11.300 8.200Z" fill="#474747"/></svg>
<svg style="left:8.500px;top:483.500px" width="6" height="6" viewBox="0 0 6 6"><path d="M.3 .3L5.700 3L.3 5.700Z" fill="#9a9a9a"/></svg>

</div>
<div class="abs" style="left:942px;top:64px;width:15.5px;height:420px;background:#ebebeb"></div>
<div class="abs" style="left:957.5px;top:64px;width:1px;height:406px;background:#d4d4d4"></div>
<svg style="left:946px;top:68px" width="8" height="8" viewBox="0 0 8 8"><path d="M.3 .3L2.300 2.300M7.700 .3L5.700 2.300M.3 7.700L2.300 5.700M7.700 7.700L5.700 5.700" stroke="#555" stroke-width="1.100"/><rect x="2" y="2" width="4" height="4" fill="none" stroke="#555" stroke-width="1"/></svg>
<div class="abs" id="vthumb" style="left:945px;top:190.400px;width:9px;height:179.200px;background:#cbcbcb;border-radius:1px"></div>
<div class="abs" style="left:35px;top:481px;width:922px;height:3.500px;background:#e9e9e9"></div>
<div class="abs" id="hthumb" style="left:35.200px;top:484px;width:927.500px;height:9px;background:#cdcdcd;border:1px solid #c6c6c6;border-radius:1px"></div>
<svg id="smear" style="left:880px;top:440px;filter:blur(.9px)" width="100" height="50" viewBox="0 0 100 50"><path d="M56 8H62C64.500 20 65.500 25 69 28.500C73 31.500 79 33 83 37.500L84 42.500H0V38H56Z" fill="#fff"/><path d="M0 41.500H83.500V44.500H0Z" fill="#f2f2f2" opacity=".8"/></svg>
<div class="abs" style="left:896px;top:490.500px;width:67px;height:3px;background:#efefef"></div>
<div class="abs" style="left:896px;top:481.800px;width:66.500px;height:9px;background:#cacdd0"></div>
<svg style="left:966px;top:484px" width="6" height="6" viewBox="0 0 6 6"><path d="M.3 .3L5.700 3L.3 5.700Z" fill="#8a8a8a"/></svg>
<div id="palette">
<div class="sw" style="left:12.40px;width:12.02px;background:#000000"></div>
<div class="sw" style="left:24.12px;width:12.02px;background:#1a1a1a"></div>
<div class="sw" style="left:35.84px;width:12.02px;background:#333333"></div>
<div class="sw" style="left:47.56px;width:12.02px;background:#4d4d4d"></div>
<div class="sw" style="left:59.28px;width:12.02px;background:#666666"></div>
<div class="sw" style="left:71.00px;width:12.02px;background:#808080"></div>
<div class="sw" style="left:82.72px;width:12.02px;background:#999999"></div>
<div class="sw" style="left:94.44px;width:12.02px;background:#b3b3b3"></div>
<div class="sw" style="left:106.16px;width:12.02px;background:#cccccc"></div>
<div class="sw" style="left:117.88px;width:12.02px;background:#e6e6e6"></div>
<div class="sw" style="left:129.60px;width:12.02px;background:#ececec"></div>
<div class="sw" style="left:141.32px;width:12.02px;background:#f2f2f2"></div>
<div class="sw" style="left:153.04px;width:12.02px;background:#f9f9f9"></div>
<div class="sw" style="left:164.76px;width:12.02px;background:#ffffff"></div>
<div class="sw" style="left:176.48px;width:12.02px;background:#800000"></div>
<div class="sw" style="left:188.20px;width:12.02px;background:#ff0000"></div>
<div class="sw" style="left:199.92px;width:12.02px;background:#808000"></div>
<div class="sw" style="left:211.64px;width:12.02px;background:#ffff00"></div>
<div class="sw" style="left:223.36px;width:12.02px;background:#008000"></div>
<div class="sw" style="left:235.08px;width:12.02px;background:#00ff00"></div>
<div class="sw" style="left:246.80px;width:12.02px;background:#008080"></div>
<div class="sw" style="left:258.52px;width:12.02px;background:#00ffff"></div>
<div class="sw" style="left:270.24px;width:12.02px;background:#000080"></div>
<div class="sw" style="left:281.96px;width:12.02px;background:#0000ff"></div>
<div class="sw" style="left:293.68px;width:12.02px;background:#800080"></div>
<div class="sw" style="left:305.40px;width:12.02px;background:#ff00ff"></div>
<div class="sw" style="left:317.12px;width:12.02px;background:#2b0000"></div>
<div class="sw" style="left:328.84px;width:12.02px;background:#550000"></div>
<div class="sw" style="left:340.56px;width:12.02px;background:#800000"></div>
<div class="sw" style="left:352.28px;width:12.02px;background:#aa0000"></div>
<div class="sw" style="left:364.00px;width:12.02px;background:#d40000"></div>
<div class="sw" style="left:375.72px;width:12.02px;background:#ff0000"></div>
<div class="sw" style="left:387.44px;width:12.02px;background:#ff2a2a"></div>
<div class="sw" style="left:399.16px;width:12.02px;background:#ff5555"></div>
<div class="sw" style="left:410.88px;width:12.02px;background:#ff8080"></div>
<div class="sw" style="left:422.60px;width:12.02px;background:#ffaaaa"></div>
<div class="sw" style="left:434.32px;width:12.02px;background:#ffd5d5"></div>
<div class="sw" style="left:446.04px;width:12.02px;background:#280b0b"></div>
<div class="sw" style="left:457.76px;width:12.02px;background:#501616"></div>
<div class="sw" style="left:469.48px;width:12.02px;background:#782121"></div>
<div class="sw" style="left:481.20px;width:12.02px;background:#a02c2c"></div>
<div class="sw" style="left:492.92px;width:12.02px;background:#c83737"></div>
<div class="sw" style="left:504.64px;width:12.02px;background:#d35f5f"></div>
<div class="sw" style="left:516.36px;width:12.02px;background:#de8787"></div>
<div class="sw" style="left:528.08px;width:12.02px;background:#e9afaf"></div>
<div class="sw" style="left:539.80px;width:12.02px;background:#f4d7d7"></div>
<div class="sw" style="left:551.52px;width:12.02px;background:#241c1c"></div>
<div class="sw" style="left:563.24px;width:12.02px;background:#483737"></div>
<div class="sw" style="left:574.96px;width:12.02px;background:#6c5353"></div>
<div class="sw" style="left:586.68px;width:12.02px;background:#916f6f"></div>
<div class="sw" style="left:598.40px;width:12.02px;background:#ac9393"></div>
<div class="sw" style="left:610.12px;width:12.02px;background:#c8b7b7"></div>
<div class="sw" style="left:621.84px;width:12.02px;background:#e3dbdb"></div>
<div class="sw" style="left:633.56px;width:12.02px;background:#2b1100"></div>
<div class="sw" style="left:645.28px;width:12.02px;background:#552200"></div>
<div class="sw" style="left:657.00px;width:12.02px;background:#803300"></div>
<div class="sw" style="left:668.72px;width:12.02px;background:#aa4400"></div>
<div class="sw" style="left:680.44px;width:12.02px;background:#d45500"></div>
<div class="sw" style="left:692.16px;width:12.02px;background:#ff6600"></div>
<div class="sw" style="left:703.88px;width:12.02px;background:#ff7f2a"></div>
<div class="sw" style="left:715.60px;width:12.02px;background:#ff9955"></div>
<div class="sw" style="left:727.32px;width:12.02px;background:#ffb380"></div>
<div class="sw" style="left:739.04px;width:12.02px;background:#ffccaa"></div>
<div class="sw" style="left:750.76px;width:12.02px;background:#ffe6d5"></div>
<div class="sw" style="left:762.48px;width:12.02px;background:#2b1100"></div>
<div class="sw" style="left:774.20px;width:12.02px;background:#552200"></div>
<div class="sw" style="left:785.92px;width:12.02px;background:#803300"></div>
<div class="sw" style="left:797.64px;width:12.02px;background:#aa4400"></div>
<div class="sw" style="left:809.36px;width:12.02px;background:#d45500"></div>
<div class="sw" style="left:821.08px;width:12.02px;background:#ff6600"></div>
<div class="sw" style="left:832.80px;width:12.02px;background:#ff7f2a"></div>
<div class="sw" style="left:844.52px;width:12.02px;background:#ff9955"></div>
<div class="sw" style="left:856.24px;width:12.02px;background:#ffb380"></div>
<div class="sw" style="left:867.96px;width:12.02px;background:#ffccaa"></div>
<div class="sw" style="left:879.68px;width:12.02px;background:#ffe6d5"></div>
<div class="abs" style="left:0;top:496px;width:12.600px;height:12px;background:#fff"></div>
<svg style="left:0;top:496px" width="13" height="12" viewBox="0 0 13 12"><path d="M.5 .5L12 11.500M12 .5L.5 11.500" stroke="#8c1c2c" stroke-width="1.100"/></svg>
<div class="abs" style="left:891.500px;top:493.500px;width:70px;height:2.500px;background:#ededed"></div>
<div class="abs" style="left:891.500px;top:494px;width:11.900px;height:12px;background:#2b1100"></div>
<div class="abs" style="left:903.200px;top:494px;width:11.900px;height:12px;background:#552200"></div>
<div class="abs" style="left:914.900px;top:494px;width:11.900px;height:12px;background:#803300"></div>
<div class="abs" style="left:926.600px;top:494px;width:11.900px;height:12px;background:#aa4400"></div>
<div class="abs" style="left:938.300px;top:494px;width:11.900px;height:12px;background:#d45500"></div>
<div class="abs" style="left:950px;top:494px;width:10px;height:12px;background:#ff6600"></div>
<div class="abs" style="left:891.500px;top:506px;width:69px;height:3px;background:#ededed"></div>
<svg style="left:954px;top:494px" width="40" height="15" viewBox="0 0 40 15"><path d="M1 2.500H36.500V14H7Z" fill="#554400"/><path d="M1 2.500L3 2.500L8 12L7 14Z" fill="#3a2a00"/><rect x="17" y="2.500" width="11.500" height="11.500" fill="#806600"/><rect x="28.500" y="2.500" width="8" height="11.500" fill="#aa8800"/></svg>
<div class="abs" style="left:960px;top:496px;width:40px;height:0"></div>
<svg style="left:993px;top:497.500px" width="6" height="6" viewBox="0 0 6 6"><path d="M5.700 .3L.3 3L5.700 5.700Z" fill="#8a8a8a"/></svg>

</div>
<div class="abs" id="palscroll" style="left:0;top:511.5px;width:193px;height:7.5px;background:#cfcfcf"></div>
<div id="status">
<span class="t" style="left:1.700px;top:523.200px;font-size:7.400px;color:#555">填充:</span>
<span class="t" style="left:1.700px;top:535px;font-size:7.400px;color:#555">笔刷:</span>
<span class="t" style="left:49px;top:523px;font-size:8px;color:#555">N/A</span>
<span class="t" style="left:49px;top:535px;font-size:8px;color:#555">N/A</span>
<span class="t" style="left:88px;top:528.500px;font-size:8.500px;color:#666">O:</span>
<div class="fld" style="left:103.500px;top:523.500px;width:33.500px;height:17px"><span class="t" style="left:3px;top:4px;color:#b0b0b0">0</span></div>
<div class="abs" style="left:128.800px;top:523px;width:8px;height:18px;background:#cdcdcd;border:1px solid #c4c4c4;border-radius:1px"></div>
<svg style="left:129.800px;top:525.500px" width="6" height="13" viewBox="0 0 6 13"><path d="M.5 4.500L3 1L5.500 4.500Z M.5 8.500L3 12L5.500 8.500Z" fill="#aeaeae"/></svg>
<div class="sep" style="left:139.500px;top:522px;height:20px"></div>
<svg style="left:144px;top:529px" width="7" height="7" viewBox="0 0 7 7"><path d="M0 1h6.500M0 3.500h6.500M0 6h6.500" stroke="#444" stroke-width="1.200"/></svg>
<svg style="left:156.800px;top:529px" width="7" height="8" viewBox="0 0 8 9"><rect x=".8" y="4" width="6" height="4" fill="none" stroke="#858585" stroke-width="1.100"/><path d="M2.200 4V2.200a1.600 1.600 0 0 1 3.200 0V3" fill="none" stroke="#858585" stroke-width="1"/></svg>
<div class="wfld" style="left:168px;top:521px;width:56.500px;height:21.500px;border-radius:3px"><span class="t" style="left:3px;top:5.600px;font-size:8.500px;font-weight:bold;letter-spacing:-.22px;-webkit-text-stroke:.2px #4a4a4a;color:#4a4a4a">•Layer 1</span></div>
<svg style="left:214px;top:525.500px" width="6" height="13" viewBox="0 0 6 13"><path d="M.5 4.500L3 1L5.500 4.500Z M.5 8.500L3 12L5.500 8.500Z" fill="#777"/></svg>
<span class="t" style="left:229px;top:527.300px;font-size:8.710px;color:#444">未选择对象。单击、Shift+单击、Alt+滚动鼠标于对象顶部、或绕着对象拖动进行选择。</span>
<div class="sep" style="left:879.500px;top:522px;height:22px;background:#dcdcdc"></div>
<span class="t" style="left:881.500px;top:532.500px;font-family:'Liberation Mono',monospace;font-size:8.200px;letter-spacing:-.62px;color:#666">Y:</span>
<span class="t" style="left:894.500px;top:532.500px;font-family:'Liberation Mono',monospace;font-size:8.200px;letter-spacing:-.62px;color:#555">1308.57</span>
<div class="abs" style="left:880px;top:524px;width:47px;height:5px;overflow:hidden"><span class="t" style="left:1.500px;top:-1.500px;font-family:'Liberation Mono',monospace;font-size:8.200px;letter-spacing:-.62px;color:#cfcfcf">X:</span><span class="t" style="left:28.600px;top:-1.500px;font-family:'Liberation Mono',monospace;font-size:8.200px;letter-spacing:-.62px;color:#777">2.00</span></div>
<span class="t" style="left:931.500px;top:528.500px;font-family:'Liberation Mono',monospace;font-size:8.200px;letter-spacing:-.62px;color:#666">Z:</span>
<div class="wfld" style="left:945px;top:523.500px;width:33px;height:16.500px"><span class="t" style="left:7px;top:3.600px;font-family:'Liberation Mono',monospace;font-size:8.200px;letter-spacing:-.62px;color:#555">35%</span></div>
<svg style="left:978.500px;top:525.500px" width="6" height="13" viewBox="0 0 6 13"><path d="M.5 4.500L3 1L5.500 4.500Z M.5 8.500L3 12L5.500 8.500Z" fill="#777"/></svg>
<svg style="left:767.5px;top:510.500px;filter:blur(.5px);opacity:.75" width="110" height="11" viewBox="0 0 110 11"><g fill="none" stroke="#fff" stroke-width="1.600"><path d="M3.0 8.500 C4.0 5 6.0 2 7.5 1.500" /><path d="M9.2 8.500 C10.2 5 12.2 2 13.7 1.500" /><path d="M15.4 8.500 C16.4 5 18.4 2 19.9 1.500" /><path d="M21.6 8.500 C22.6 5 24.6 2 26.1 1.500" /><path d="M27.8 8.500 C28.8 5 30.8 2 32.3 1.500" /><path d="M34.0 8.500 C35.0 5 37.0 2 38.5 1.500" /><path d="M40.2 8.500 C41.2 5 43.2 2 44.7 1.500" /><path opacity=".55" d="M49 5.500H108" stroke-width="1"/></g></svg>
<svg style="left:896px;top:510.500px;filter:blur(.5px);opacity:.75" width="62" height="11" viewBox="0 0 62 11"><g fill="none" stroke="#fff" stroke-width="1.600"><path d="M3.0 8.500 C4.0 5 6.0 2 7.5 1.500" /><path d="M9.2 8.500 C10.2 5 12.2 2 13.7 1.500" /><path d="M15.4 8.500 C16.4 5 18.4 2 19.9 1.500" /><path d="M21.6 8.500 C22.6 5 24.6 2 26.1 1.500" /><path d="M27.8 8.500 C28.8 5 30.8 2 32.3 1.500" /><path d="M34.0 8.500 C35.0 5 37.0 2 38.5 1.500" /><path d="M40.2 8.500 C41.2 5 43.2 2 44.7 1.500" /><path opacity=".55" d="M49 5.500H60" stroke-width="1"/></g></svg>

</div>
<div id="cmdbar">
<svg style="left:964.5px;top:69.400px" width="10" height="10" viewBox="0 0 10 10"><path d="M.6 .6H9V6.500L6.500 9.400H.6Z" fill="#f4f4f4" stroke="#555" stroke-width="1"/><path d="M9 6.500H6.500V9.400Z" fill="#333"/></svg>
<svg style="left:964px;top:90px" width="11" height="10" viewBox="0 0 11 10"><path d="M.6 9.400V.8H4.500L5.500 2.200H10.400V9.400Z" fill="#333" stroke="#555" stroke-width="1"/><rect x="1.600" y="4" width="7.800" height="4.600" fill="#ececec"/></svg>
<svg style="left:964.5px;top:110.500px" width="10" height="10" viewBox="0 0 10 10"><path d="M.6 .6H8L9.400 2V9.400H.6Z" fill="#ececec" stroke="#555" stroke-width="1"/><rect x="2.500" y=".8" width="4.500" height="3" fill="#555"/><rect x="5" y="1.200" width="1.200" height="2" fill="#eee"/><rect x="2.200" y="5.800" width="5.600" height="3.400" fill="#fafafa" stroke="#555" stroke-width=".6"/></svg>
<svg style="left:964px;top:131px" width="11" height="10.5" viewBox="0 0 11 10.5"><rect x="2.600" y=".5" width="5.800" height="3" fill="#f2f2f2" stroke="#555" stroke-width=".9"/><rect x=".6" y="3.200" width="9.800" height="4.600" rx=".8" fill="#8c8c8c" stroke="#555" stroke-width=".9"/><rect x="2.600" y="6.400" width="5.800" height="3.600" fill="#f6f6f6" stroke="#555" stroke-width=".9"/></svg>
<div class="hsep" style="left:962px;top:150.5px;width:15px"></div>
<svg style="left:964.5px;top:160px" width="10" height="10.5" viewBox="0 0 10 10.5"><path d="M.6 .6H9.400V6.500L6.500 9.600H.6Z" fill="#f4f4f4" stroke="#555" stroke-width="1"/><path d="M8.500 4.500L5 8M5 5.500V8H7.500" fill="none" stroke="#333" stroke-width="1.100"/></svg>
<svg style="left:964.5px;top:181px" width="10" height="10.5" viewBox="0 0 10 10.5"><path d="M.6 .6H9.400V9.600H3.500L.6 6.500Z" fill="#f4f4f4" stroke="#555" stroke-width="1"/><path d="M5.500 5L2 8.500M2 6V8.500H4.500" fill="none" stroke="#333" stroke-width="1.100"/></svg>
<div class="hsep" style="left:962px;top:199.5px;width:15px"></div>
<svg style="left:964.5px;top:210.5px" width="10" height="10.5" viewBox="0 0 10 10.5"><path d="M3 2.500H5.500A3.200 3.200 0 0 1 5.500 9H3" fill="none" stroke="#d2d2d2" stroke-width="1.300"/><path d="M3.500 0L.5 2.500L3.500 5Z" fill="#d2d2d2"/></svg>
<svg style="left:964.5px;top:231.5px" width="10" height="10.5" viewBox="0 0 10 10.5"><path d="M7 2.500H4.500A3.200 3.200 0 0 0 4.500 9H7" fill="none" stroke="#d2d2d2" stroke-width="1.300"/><path d="M6.500 0L9.500 2.500L6.500 5Z" fill="#d2d2d2"/></svg>
<div class="hsep" style="left:962px;top:249px;width:15px"></div>
<svg style="left:964.5px;top:259px" width="10.5" height="10.5" viewBox="0 0 10.5 10.5"><path d="M.6 .6H6.500V8H.6Z" fill="#f4f4f4" stroke="#555" stroke-width="1"/><path d="M3 2.600H9.800V7.500L7.500 10H3Z" fill="#f4f4f4" stroke="#555" stroke-width="1"/><path d="M9.800 7.500H7.500V10Z" fill="#333"/></svg>
<svg style="left:964.5px;top:280.5px" width="10" height="10" viewBox="0 0 10 10"><path d="M1.500 .3L7 7M8.500 .3L3 7" stroke="#333" stroke-width="1.100"/><circle cx="2.200" cy="8" r="1.500" fill="none" stroke="#333" stroke-width="1"/><circle cx="7.800" cy="8" r="1.500" fill="none" stroke="#333" stroke-width="1"/></svg>
<svg style="left:964.5px;top:300.5px" width="10" height="10.5" viewBox="0 0 10 10.5"><rect x=".6" y="1.400" width="8.800" height="8.600" rx=".8" fill="#8a8a8a" stroke="#555" stroke-width="1"/><rect x="3" y=".3" width="4" height="2.200" fill="#444"/><path d="M2.400 4H7.800V8.600H2.400Z" fill="#f4f4f4"/><path d="M3.400 6.500H6" stroke="#777" stroke-width=".7"/></svg>
<div class="hsep" style="left:962px;top:320px;width:15px"></div>
<svg style="left:964px;top:330px" width="11" height="11" viewBox="0 0 11 11"><path d="M.6 3V.6H3M8 .6H10.400V3M.6 8V10.400H3M8 10.400H10.400V8" fill="none" stroke="#555" stroke-width="1.100"/><rect x="2.800" y="2.800" width="5.400" height="5.400" fill="#f2f2f2" stroke="#666" stroke-width=".9" stroke-dasharray="1.400 .8"/></svg>
<svg style="left:964px;top:350.5px" width="11" height="11" viewBox="0 0 11 11"><path d="M.6 3V.6H3M8 .6H10.400V3M.6 8V10.400H3M8 10.400H10.400V8" fill="none" stroke="#555" stroke-width="1.100"/><path d="M5.500 2.200L8.800 5.500L5.500 8.800L2.200 5.500Z" fill="#f2f2f2" stroke="#555" stroke-width="1"/><circle cx="5.500" cy="5.500" r="1.200" fill="#777"/></svg>
<svg style="left:964px;top:371px" width="11" height="11" viewBox="0 0 11 11"><path d="M.6 3V.6H3M8 .6H10.400V3M.6 8V10.400H3M8 10.400H10.400V8" fill="none" stroke="#555" stroke-width="1.100"/><rect x="3" y="2.400" width="5" height="6.200" fill="#f2f2f2" stroke="#555" stroke-width="1"/><path d="M4 4.500H7M4 6.300H7" stroke="#888" stroke-width=".6"/></svg>
<div class="hsep" style="left:962px;top:390px;width:15px"></div>
<svg style="left:964.5px;top:400px" width="10.5" height="11" viewBox="0 0 10.5 11"><path d="M.6 .6H6.500V8.500H.6Z" fill="#e8e8e8" stroke="#555" stroke-width="1"/><path d="M2.800 2.400H9.800V7.800L7.300 10.400H2.800Z" fill="#f6f6f6" stroke="#555" stroke-width="1"/><path d="M9.800 7.800H7.300V10.400Z" fill="#444"/></svg>
<svg style="left:964.5px;top:420.5px" width="11" height="10.5" viewBox="0 0 11 10.5"><path d="M.6 .6H6V8H.6Z" fill="#f0f0f0" stroke="#555" stroke-width="1"/><path d="M3 2.600H9.600V10H3Z" fill="#f6f6f6" stroke="#555" stroke-width="1"/><rect x="5.800" y="6.200" width="3.600" height="3.400" fill="#444"/><path d="M6.600 6.200V5.300a1 1 0 0 1 2 0V6.200" fill="none" stroke="#444" stroke-width=".8"/></svg>
<svg style="left:964.5px;top:441px" width="11" height="10.5" viewBox="0 0 11 10.5"><path d="M.6 .6H6V8H.6Z" fill="#f0f0f0" stroke="#555" stroke-width="1"/><path d="M3 2.600H9.600V10H3Z" fill="#f6f6f6" stroke="#555" stroke-width="1"/><rect x="5.800" y="6.200" width="3.600" height="3.400" fill="#444"/><path d="M6.600 6.200V5.300a1 1 0 0 1 2 0V6.200" fill="none" stroke="#444" stroke-width=".8"/></svg>
<div class="hsep" style="left:962px;top:459.5px;width:15px"></div>

</div>
<div id="snapbar">
<div class="tb" style="left:980.300px;top:65px;width:18.300px;height:18.300px"></div>
<svg style="left:982px;top:66.5px" width="16" height="16" viewBox="0 0 16 16"><path d="M4.500 4.500L9.500 9.500" stroke="#111" stroke-width="1.300"/><path d="M10.600 6.800L10.600 10.600L6.800 10.600Z" fill="#111"/><circle cx="3.400" cy="3.500" r="2.100" fill="#c4bcff" stroke="#4b3fe2" stroke-width="1.500"/><circle cx="11.700" cy="12" r="2" fill="#a8dcbc" stroke="#3a9468" stroke-width="1.400"/></svg>
<div class="hsep" style="left:984px;top:88px;width:13px"></div>
<svg style="left:982px;top:96.0px" width="16" height="16" viewBox="0 0 16 16"><path d="M4.500 4.500L9.500 9.500" stroke="#111" stroke-width="1.300"/><path d="M10.600 6.800L10.600 10.600L6.800 10.600Z" fill="#111"/><circle cx="3.400" cy="3.500" r="2.100" fill="#c4bcff" stroke="#4b3fe2" stroke-width="1.500"/><circle cx="11.700" cy="12" r="2" fill="#a8dcbc" stroke="#3a9468" stroke-width="1.400"/></svg>
<svg style="left:985px;top:118.5px" width="12" height="12" viewBox="0 0 12 12"><path d="M11 0V10.500H0" fill="none" stroke="#d6d6d6" stroke-width="1.200"/></svg>
<svg style="left:985px;top:138px" width="12" height="13" viewBox="0 0 12 13"><path d="M9.500 0V10.500H0" fill="none" stroke="#d6d6d6" stroke-width="1.200"/><circle cx="9.500" cy="10.500" r="1.600" fill="#d6d6d6"/></svg>
<svg style="left:985px;top:159.5px" width="12" height="12" viewBox="0 0 12 12"><path d="M9.500 1V10H0" fill="none" stroke="#d6d6d6" stroke-width="1.200"/><circle cx="9.500" cy="3" r="1.500" fill="#d6d6d6"/><path d="M9.500 0V4" stroke="#d6d6d6" stroke-width="1.200"/></svg>
<svg style="left:985px;top:180px" width="12" height="11" viewBox="0 0 12 11"><path d="M10.500 0V10H1" fill="none" stroke="#d6d6d6" stroke-width="1.200"/><circle cx="3.500" cy="3.500" r="1.500" fill="#d6d6d6"/></svg>
<div class="hsep" style="left:984px;top:199.5px;width:13px"></div>
<div class="tb" style="left:980.300px;top:206px;width:18.300px;height:18.300px"></div>
<svg style="left:982px;top:207.2px" width="16" height="16" viewBox="0 0 16 16"><path d="M4.500 4.500L9.500 9.500" stroke="#111" stroke-width="1.300"/><path d="M10.600 6.800L10.600 10.600L6.800 10.600Z" fill="#111"/><circle cx="3.400" cy="3.500" r="2.100" fill="#c4bcff" stroke="#4b3fe2" stroke-width="1.500"/><circle cx="11.700" cy="12" r="2" fill="#a8dcbc" stroke="#3a9468" stroke-width="1.400"/></svg>
<svg style="left:983.5px;top:230px" width="13" height="12" viewBox="0 0 13 12"><path d="M.5 .8C5 .8 8.500 3.500 9 9.500" fill="none" stroke="#2e7d32" stroke-width="1.500"/><path d="M5.500 8L9.200 11.600L12.500 6.500" fill="none" stroke="#2e7d32" stroke-width="1.400"/></svg>
<svg style="left:983.5px;top:250px" width="13" height="11.5" viewBox="0 0 13 11.5"><path d="M.5 10.500L12.500 .8" stroke="#555" stroke-width="1.100"/><path d="M2 3L11.500 9" stroke="#2e7d32" stroke-width="1.300"/><path d="M6.500 3.800L8.800 6.200L6.500 8.600L4.200 6.200Z" fill="#3a9a4a" stroke="#1b5e20" stroke-width=".6"/></svg>
<svg style="left:983.5px;top:270px" width="13" height="12.5" viewBox="0 0 13 12.5"><path d="M.5 .8C5 1 8 3.500 8 8" fill="none" stroke="#2e7d32" stroke-width="1.400"/><path d="M8 8C9.500 7 11 5.500 12.500 4.500" fill="none" stroke="#2e7d32" stroke-width="1.300"/><rect x="5.200" y="7" width="4.400" height="4.400" transform="rotate(20 7.400 9.200)" fill="#43a656" stroke="#1b5e20" stroke-width=".7"/></svg>
<svg style="left:983.5px;top:289.5px" width="13" height="12.5" viewBox="0 0 13 12.5"><path d="M1.500 2.500C4 2 7 3 7.500 6.500C8 10 9.500 12 12.500 9.500" fill="none" stroke="#2e7d32" stroke-width="1.400"/><rect x="3" y=".6" width="4.200" height="4.200" fill="#43a656" stroke="#1b5e20" stroke-width=".7"/></svg>
<svg style="left:983.5px;top:311.5px" width="13" height="12.5" viewBox="0 0 13 12.5"><path d="M.8 11.800L12.200 .8" stroke="#c62828" stroke-width="1.800"/><path d="M3 7.500L5 9.500L3 11.500L1 9.500Z" fill="#d32f2f"/><path d="M10 1.500L12 3.500L10 5.500L8 3.500Z" fill="#d32f2f"/><path d="M6.500 3.800L9 6.200L6.500 8.600L4 6.200Z" fill="#3a9a4a" stroke="#1b5e20" stroke-width=".6"/></svg>
<div class="hsep" style="left:984px;top:331px;width:13px"></div>
<div class="tb" style="left:980.300px;top:337.5px;width:18.300px;height:18.300px"></div>
<svg style="left:982px;top:339.5px" width="16" height="16" viewBox="0 0 16 16"><path d="M4.500 4.500L9.500 9.500" stroke="#111" stroke-width="1.300"/><path d="M10.600 6.800L10.600 10.600L6.800 10.600Z" fill="#111"/><circle cx="3.400" cy="3.500" r="2.100" fill="#c4bcff" stroke="#4b3fe2" stroke-width="1.500"/><circle cx="11.700" cy="12" r="2" fill="#a8dcbc" stroke="#3a9468" stroke-width="1.400"/></svg>
<svg style="left:984.5px;top:361.5px" width="11" height="10" viewBox="0 0 11 10"><path d="M10 0V9H0" fill="none" stroke="#777" stroke-width="1.100"/><rect x="2.500" y="2.500" width="3.400" height="3.400" fill="#4caf6a" stroke="#2e7d32" stroke-width=".7"/></svg>
<svg style="left:984.5px;top:381.5px" width="11" height="11" viewBox="0 0 11 11"><path d="M10 0V10H0" fill="none" stroke="#444" stroke-width="1.100" stroke-dasharray="1.200 1"/><path d="M3.500 1.500V7.500M.5 4.500H6.500" stroke="#222" stroke-width="1.300"/></svg>
<span class="t" style="left:983px;top:400.300px;font-size:14.800px;font-weight:bold;color:#111;-webkit-text-stroke:.6px #111;transform:scaleX(1.100);transform-origin:0 0">A</span>
<svg style="left:982px;top:408.5px" width="7" height="6" viewBox="0 0 7 6"><path d="M.5 4.500L4.500 .8L6.200 2.200L2.500 5.500Z" fill="#3a9a4a" stroke="#2e7d32" stroke-width=".6"/></svg>
<div class="hsep" style="left:984px;top:422px;width:13px"></div>
<svg style="left:984.5px;top:431.5px" width="10" height="13" viewBox="0 0 10 13"><defs><linearGradient id="pg" x1="0" y1="0" x2="0" y2="1"><stop offset="0" stop-color="#fff"/><stop offset="1" stop-color="#bdbdbd"/></linearGradient></defs><rect x=".7" y=".7" width="8.600" height="11.200" fill="url(#pg)" stroke="#333" stroke-width="1.300"/></svg>
<div class="tb" style="left:980.300px;top:448.5px;width:18.300px;height:18.300px"></div>
<svg style="left:983.400px;top:451.800px" width="13.500" height="13.200" viewBox="0 0 12 12" preserveAspectRatio="none"><path d="M0 1.200H12M0 4.400H12M0 7.600H12M0 10.800H12M1.200 0V12M4.400 0V12M7.600 0V12M10.800 0V12" stroke="#2828f0" stroke-width="1.250"/></svg>
<div class="tb" style="left:980.300px;top:469.5px;width:18.300px;height:18.300px"></div>
<svg style="left:983.500px;top:471.800px" width="12.800" height="13" viewBox="0 0 12 13" preserveAspectRatio="none"><path d="M1.200 .3V12.700M10.800 .3V12.700M3.800 12.700L9.200 .3" stroke="#5050c8" stroke-width="1.300"/></svg>

</div>
</body></html>
